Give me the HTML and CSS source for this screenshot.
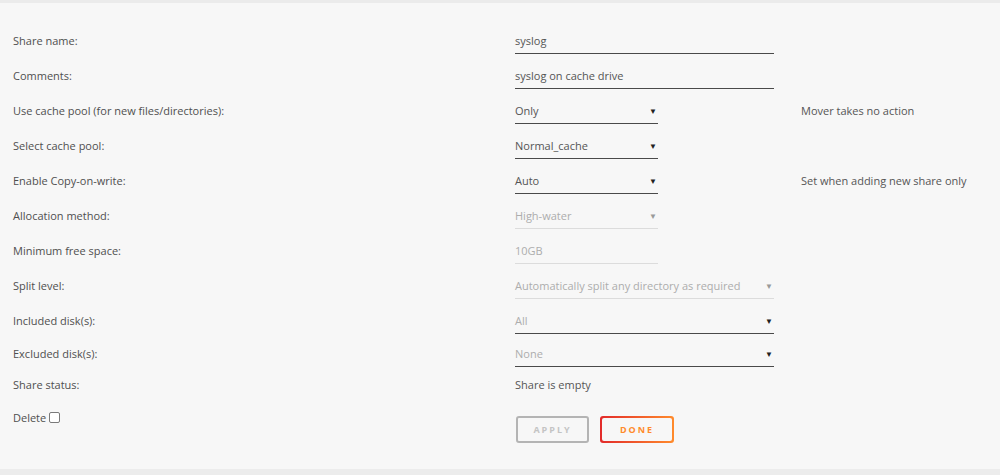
FILE: index.html
```html
<!DOCTYPE html>
<html lang="en">

<head>
    <meta charset="UTF-8">
    <meta name="viewport" content="width=device-width, initial-scale=1.0">
    <title>Share settings</title>
    <link rel="stylesheet" href="styles.css">
</head>

<body>
    <div class="page">
        <form class="share">
            <!-- 名称 -->
            <div class="row">
                <span class="label">Share name:</span>
                <span class="field wide"><span class="val">syslog</span></span>
            </div>
            <div class="row">
                <span class="label">Comments:</span>
                <span class="field wide"><span class="val">syslog on cache drive</span></span>
            </div>
            <!-- 缓存 -->
            <div class="row">
                <span class="label">Use cache pool (for new files/directories):</span>
                <span class="field select"><span class="val">Only</span><span class="arrow">&#9660;</span></span>
                <span class="note">Mover takes no action</span>
            </div>
            <div class="row">
                <span class="label">Select cache pool:</span>
                <span class="field select"><span class="val">Normal_cache</span><span class="arrow">&#9660;</span></span>
            </div>
            <div class="row">
                <span class="label">Enable Copy-on-write:</span>
                <span class="field select"><span class="val">Auto</span><span class="arrow">&#9660;</span></span>
                <span class="note">Set when adding new share only</span>
            </div>
            <!-- 灰色的 -->
            <div class="row">
                <span class="label">Allocation method:</span>
                <span class="field select off"><span class="val">High-water</span><span class="arrow">&#9660;</span></span>
            </div>
            <div class="row">
                <span class="label">Minimum free space:</span>
                <span class="field select off"><span class="val">10GB</span></span>
            </div>
            <div class="row">
                <span class="label">Split level:</span>
                <span class="field wide off"><span class="val">Automatically split any directory as required</span><span class="arrow">&#9660;</span></span>
            </div>
            <div class="row">
                <span class="label">Included disk(s):</span>
                <span class="field wide part"><span class="val">All</span><span class="arrow">&#9660;</span></span>
            </div>
            <div class="row short">
                <span class="label">Excluded disk(s):</span>
                <span class="field wide part"><span class="val">None</span><span class="arrow">&#9660;</span></span>
            </div>
            <div class="row short">
                <span class="label">Share status:</span>
                <span class="status">Share is empty</span>
            </div>
            <div class="row last">
                <span class="label">Delete <span class="box"></span></span>
                <span class="buttons">
                    <span class="btn apply">APPLY</span>
                    <span class="btn done"><span>DONE</span></span>
                </span>
            </div>
        </form>
    </div>
</body>

</html>
```

FILE: styles.css
```css
* {
    margin: 0;
    padding: 0;
    box-sizing: border-box;
}

body {
    background-color: #ececec;
    font-family: "Open Sans", "Noto Sans", sans-serif;
    font-size: 11px;
    color: #4f4f4f;
}

.page {
    height: 469px;
    border-top: 3px solid #ebebeb;
    background-color: #f7f7f7;
}

.share {
    padding-top: 20px;
    padding-left: 13px;
}

.row {
    display: grid;
    grid-template-columns: 502px 286px 1fr;
    align-items: center;
    height: 35px;
}

.row.short {
    height: 31px;
}

.row.last {
    align-items: start;
    height: 60px;
}

.field {
    display: flex;
    align-items: flex-end;
    justify-content: space-between;
    height: 24px;
    margin-top: 3px;
    padding-bottom: 5px;
    border-bottom: 1px solid #4a4a4a;
    color: #555;
}

.wide {
    width: 259px;
}

.select {
    width: 143px;
}

.arrow {
    font-size: 8px;
    line-height: 14px;
    color: #222;
    padding-right: 1px;
}

.off {
    color: #adadad;
    border-bottom-color: #dcdcdc;
}

.off .arrow {
    color: #9a9a9a;
}

.part {
    color: #adadad;
}

.note {
    color: #555;
}

.status {
    color: #555;
}

.label {
    display: flex;
    align-items: center;
    gap: 3px;
}

.row.last .label {
    padding-top: 10px;
}

.box {
    display: inline-block;
    width: 11px;
    height: 11px;
    border: 1px solid #7a7a7a;
    border-radius: 2px;
    background-color: #fff;
}

.buttons {
    display: flex;
    gap: 11px;
    padding-top: 16px;
    padding-left: 1px;
}

.btn {
    display: flex;
    align-items: center;
    justify-content: center;
    width: 73px;
    height: 27px;
    border-radius: 3px;
    font-size: 9px;
    font-weight: 700;
    letter-spacing: 2px;
}

.apply {
    border: 2px solid #b4b4b4;
    color: #c4c4c4;
}

.done {
    width: 74px;
    padding: 2px;
    background: linear-gradient(90deg, #e22a2a, #ff8b2c);
}

.done span {
    display: flex;
    align-items: center;
    justify-content: center;
    width: 100%;
    height: 100%;
    border-radius: 2px;
    background-color: #f7f7f7;
    color: #ff8b2c;
}
```
